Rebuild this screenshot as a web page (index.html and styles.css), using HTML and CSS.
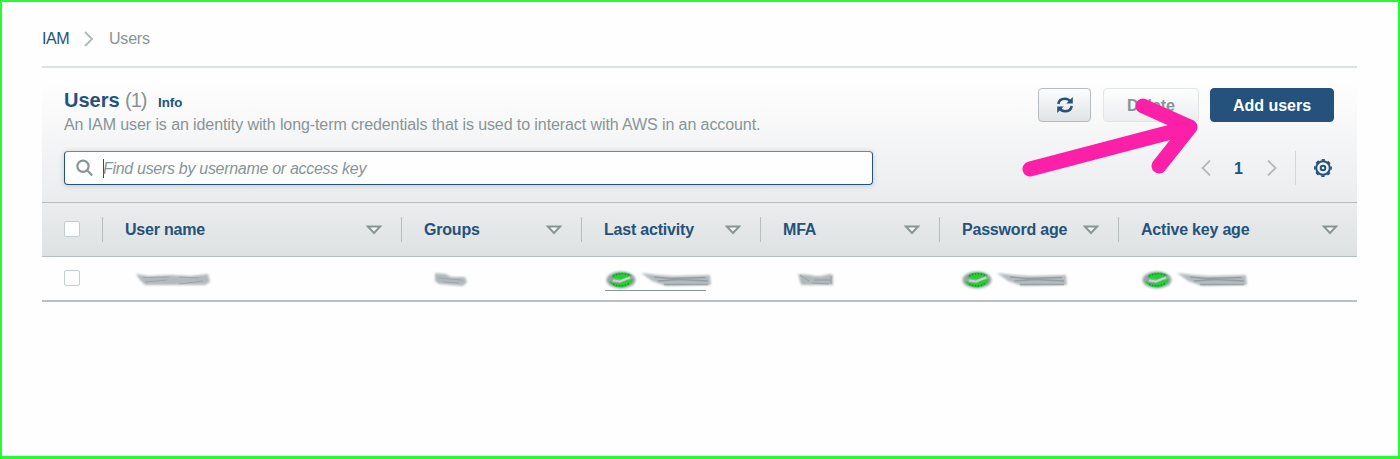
FILE: index.html
```html
<!DOCTYPE html>
<html lang="en">
<head>
<meta charset="utf-8">
<title>IAM Users</title>
<link rel="stylesheet" href="styles.css">
</head>
<body>
<svg class="defs" width="0" height="0" aria-hidden="true">
  <defs>
    <filter id="soft" x="-20%" y="-50%" width="140%" height="200%"><feGaussianBlur stdDeviation="1.3"/></filter>
    <filter id="faint" x="-20%" y="-50%" width="140%" height="200%"><feGaussianBlur stdDeviation=".4"/></filter>
    <symbol id="caret" viewBox="0 0 16 10"><path d="M1.800 1.400H14.200L8 8Z" fill="#f4f5f5" stroke="#879596" stroke-width="2"/></symbol>
    <symbol id="status" viewBox="0 0 112 22">
      <g filter="url(#soft)">
        <ellipse cx="17" cy="11" rx="14.500" ry="8.500" fill="#9aa5a7"/>
        <path d="M37 4L54 6 70 7 106 6 107 16 62 17 48 12Z" fill="#b4bbbf"/>
      </g>
      <g filter="url(#faint)">
        <path d="M7 8.500Q9 3.500 18 3.500Q26 3.500 28 7Q21 8 18 10Q13 10 7 8.500Z" fill="#22d12c"/>
        <path d="M5 12Q12 15 17 14Q22 11 29 10Q29 16 18 18.500Q8 18.500 5 12Z" fill="#22d12c"/>
        <path d="M9 7Q17 3 26 6.500M9 15Q18 19 26 14" fill="none" stroke="#245b70" stroke-width="1.300" stroke-dasharray="1.500 1.500" opacity=".7"/>
        <path d="M9 11.500L16 12.500 26 8.500" fill="none" stroke="#ccd2d4" stroke-width="2"/>
        <path d="M50 8L66 9.500 102 8.500M54 12L75 10.500 104 12M60 15.500H104" fill="none" stroke="#879294" stroke-width="1.300" opacity=".7"/>
      </g>
    </symbol>
  </defs>
</svg>
<main class="page">
  <nav class="crumbs">
    <a class="crumb-link">IAM</a>
    <svg class="crumb-sep" width="10" height="16" viewBox="0 0 10 16"><path d="M1 1L8 8 1 15" fill="none" stroke="#b2babb" stroke-width="2"/></svg>
    <span class="crumb-current">Users</span>
  </nav>
  <section class="panel">
    <header class="head">
      <div class="top">
        <div class="intro">
          <div class="heading"><h1 class="title">Users</h1><span class="count">(1)</span><a class="info">Info</a></div>
          <p class="desc">An IAM user is an identity with long-term credentials that is used to interact with AWS in an account.</p>
        </div>
        <div class="actions">
          <button class="btn refresh" aria-label="Refresh">
            <svg width="18" height="18" viewBox="0 0 18 18" fill="none" stroke="#24527c" stroke-width="2.500"><path d="M2.300 8C2.800 4.500 5.500 2.700 9 2.700c2.300 0 4.200 1 5.500 3M15.700 10c-.5 3.500-3.200 5.300-6.700 5.300-2.300 0-4.200-1-5.500-3"/><path d="M16.800 1V7.500H10.300ZM1.200 17V10.500H7.700Z" fill="#24527c" stroke="none"/></svg>
          </button>
          <button class="btn delete">Delete</button>
          <button class="btn add">Add users</button>
        </div>
      </div>
      <div class="tools">
        <div class="search">
          <svg width="18" height="18" viewBox="0 0 18 18" fill="none" stroke="#879596" stroke-width="2.200"><circle cx="7" cy="7.200" r="5.600"/><path d="M11.100 11.300L16.200 16.500"/></svg>
          <span class="cursor"></span><span class="placeholder">Find users by username or access key</span>
        </div>
        <div class="pager">
          <svg width="10" height="16" viewBox="0 0 10 16"><path d="M9 .5L1.500 8 9 15.500" fill="none" stroke="#b2babb" stroke-width="1.800"/></svg>
          <span class="num">1</span>
          <svg width="10" height="16" viewBox="0 0 10 16"><path d="M1 .5L8.500 8 1 15.500" fill="none" stroke="#b2babb" stroke-width="1.800"/></svg>
          <span class="rule"></span>
          <svg width="18" height="18" viewBox="0 0 18 18" fill="none" stroke="#24527c"><circle cx="9" cy="9" r="6.800" stroke-width="2"/><circle cx="9" cy="9" r="8.100" stroke-width="1.700" stroke-dasharray="3.400 2.960" stroke-dashoffset="1.700"/><circle cx="9" cy="9" r="2.300" stroke-width="2"/></svg>
        </div>
      </div>
    </header>
    <div class="row thead">
      <div class="check"><span class="box"></span></div>
      <div class="th"><span>User name</span><svg class="caret"><use href="#caret"/></svg></div>
      <div class="th"><span>Groups</span><svg class="caret"><use href="#caret"/></svg></div>
      <div class="th"><span>Last activity</span><svg class="caret"><use href="#caret"/></svg></div>
      <div class="th"><span>MFA</span><svg class="caret"><use href="#caret"/></svg></div>
      <div class="th"><span>Password age</span><svg class="caret"><use href="#caret"/></svg></div>
      <div class="th"><span>Active key age</span><svg class="caret"><use href="#caret"/></svg></div>
    </div>
    <div class="row tbody">
      <div class="check"><span class="box"></span></div>
      <div class="td name"><svg width="82" height="22" viewBox="0 0 82 22"><path filter="url(#soft)" d="M3 5L16 7 38 6 58 7 75 5 77 13 72 16 12 16 7 11Z" fill="#b3babe"/><path filter="url(#faint)" d="M10 8.500L36 8M46 8L66 9M12 13L34 11M46 15L70 12" stroke="#929c9f" opacity=".7"/></svg></div>
      <div class="td group"><svg width="42" height="22" viewBox="0 0 42 22"><path filter="url(#soft)" d="M4 4L15 5 20 8 34 8 36 13 32 17 8 15 4 12Z" fill="#b1b8bc"/><path filter="url(#faint)" d="M8 9L30 11M12 13L28 14" stroke="#929c9f" opacity=".6"/></svg></div>
      <div class="td activity"><svg class="status"><use href="#status"/></svg></div>
      <div class="td mfa"><svg width="42" height="22" viewBox="0 0 42 22"><path filter="url(#soft)" d="M2 5L14 6 19 7 25 7 34 5 37 6 37 16 5 16Z" fill="#b1b8bc"/><path filter="url(#faint)" d="M4 6L13 12M18 11H35M16 14L33 15M35 7V15" stroke="#879294" opacity=".7"/></svg></div>
      <div class="td password"><svg class="status"><use href="#status"/></svg></div>
      <div class="td key"><svg class="status"><use href="#status"/></svg></div>
    </div>
  </section>
  <svg class="arrow" width="190" height="90" viewBox="0 0 190 90" fill="none" stroke="#fc20a8" stroke-width="15" stroke-linecap="round" stroke-linejoin="round"><path d="M22 79L182 37M135 16L182 37 151 76"/></svg>
</main>
</body>
</html>
```

FILE: styles.css
```css
* { box-sizing: border-box; }
body { margin: 0; font-family: "Liberation Sans", Arial, sans-serif; font-size: 16px; color: #879596; }
.defs { position: absolute; }
.page { position: relative; height: 459px; padding: 0 41px 0 40px; background: #fefefe; border: 2px solid #24fb32; border-bottom-width: 3px; overflow: hidden; }
.crumbs { display: flex; align-items: center; height: 66px; padding-top: 9px; border-bottom: 2px solid #dce2e3; }
.crumb-link { width: 42px; color: #24527c; letter-spacing: -.4px; }
.crumb-sep { width: 10px; margin-right: 15px; }
.crumb-current { letter-spacing: -.2px; }
.panel { margin-top: 15px; width: 1315px; }
.head { height: 119px; padding: 5px 23px 0 22px; background: linear-gradient(#fefefe, #ebecee); }
.top { display: flex; justify-content: space-between; height: 63px; }
.heading { display: flex; align-items: baseline; height: 26px; }
.title { margin: 0; width: 61px; font-size: 20px; line-height: 24px; color: #24527c; }
.count { width: 33px; font-size: 20px; letter-spacing: -1px; }
.info { font-size: 13.3px; font-weight: bold; color: #24527c; }
.desc { margin: 0; line-height: 21px; white-space: nowrap; letter-spacing: -.09px; }
.actions { display: flex; align-items: flex-start; }
.btn { height: 34px; padding: 2px 0 0; border: 1px solid #b5bdc0; border-radius: 4px; font: bold 16px "Liberation Sans", Arial, sans-serif; }
.refresh { display: flex; align-items: center; justify-content: center; width: 53px; margin-right: 12px; padding: 0; background: linear-gradient(#fdfdfd, #dfe3e4); }
.delete { width: 96px; margin-right: 11px; color: #879596; border-color: #e2e5e6; background: linear-gradient(#fefefe, #ebedee); }
.add { width: 124px; color: #fff; background: #24527c; border-color: #24527c; }
.tools { display: flex; justify-content: space-between; }
.search { display: flex; align-items: center; width: 809px; height: 34px; padding-left: 11px; background: #fefefe; border: 1px solid #24527c; border-top-color: #728792; border-radius: 4px; box-shadow: 0 1px 5px 1px #cdd6d8; }
.cursor { width: 1px; height: 19px; margin-left: 9px; background: #24527c; }
.placeholder { padding-top: 1px; margin-left: -1px; font-style: italic; letter-spacing: -.3px; }
.pager { display: flex; align-items: center; height: 34px; padding-right: 2px; }
.num { width: 56px; padding: 1px 1px 0 0; text-align: center; color: #24527c; font-weight: bold; }
.rule { width: 1px; height: 34px; margin: 0 18px; background: #d2d8da; }
.row { display: grid; grid-template-columns: 60px 299px 180px 179px 179px 179px 239px; align-items: center; }
.thead { height: 55px; border-top: 1px solid #b5bdc0; border-bottom: 1px solid #b5bdc0; background: linear-gradient(#ececee, #dce2e2); }
.tbody { height: 45px; border-bottom: 2px solid #b8c0c4; }
.check { padding: 0 0 2px 22px; }
.box { display: block; width: 16px; height: 16px; background: #fefefe; border: 1px solid #c5cdcf; border-radius: 2px; }
.th { display: flex; align-items: center; justify-content: space-between; height: 25px; padding: 0 19px 0 22px; border-left: 1px solid #b5bdc0; color: #24527c; font-weight: bold; white-space: nowrap; letter-spacing: -.2px; }
.caret { width: 16px; height: 10px; }
.td { height: 20px; }
.td svg { display: block; }
.td .status { width: 112px; height: 22px; }
.name { padding-left: 31px; }
.group { padding-left: 30px; }
.activity { padding-left: 23px; }
.activity::after { content: ""; display: block; width: 101px; height: 1px; margin-left: 1px; margin-top: -1px; background: #879596; }
.mfa { padding-left: 36px; }
.password { padding-left: 21px; }
.key { padding-left: 22px; }
.arrow { position: absolute; left: 1006px; top: 88px; }
```
